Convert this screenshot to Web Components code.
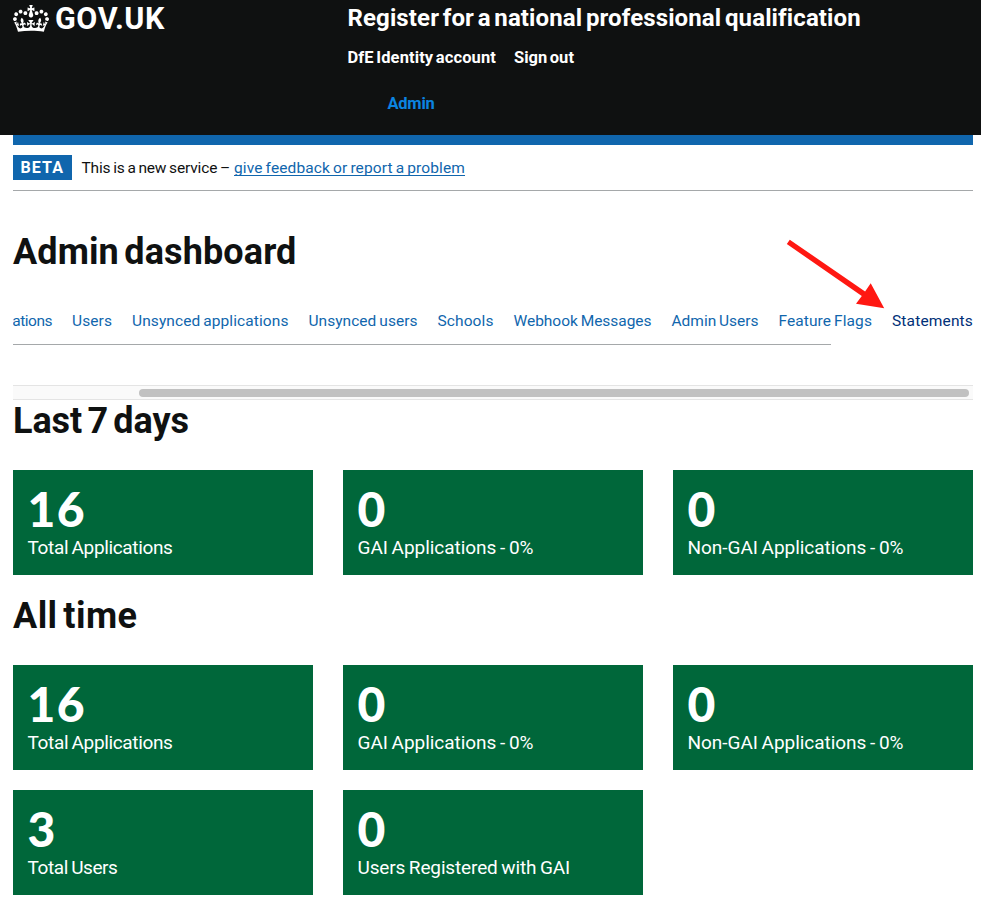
<!DOCTYPE html>
<html lang="en">
<head>
<meta charset="utf-8">
<title>Admin dashboard</title>
<style>
html,body{margin:0;background:#fff}
body{font-family:Roboto,"Liberation Sans",sans-serif;color:#0f1111;width:981px;height:921px;overflow:hidden;word-spacing:-.06em}
</style>
</head>
<body>
<admin-page></admin-page>
<script>
// A run of text whose tracking is tuned to fill a given width.
class FitText extends HTMLElement {
  connectedCallback() {
    const root = this.attachShadow({ mode: 'open' });
    root.innerHTML = `<style>:host{display:inline-block;white-space:nowrap;vertical-align:top}span{display:inline-block}:host([underlined]) span{text-decoration:underline;text-decoration-thickness:1px;text-underline-offset:2px;text-decoration-skip-ink:none}</style><span><slot></slot></span>`;
    const span = root.querySelector('span');
    const w = Number(this.getAttribute('w'));
    const n = this.textContent.length;
    this.style.width = w + 'px';
    span.style.letterSpacing = ((w - span.getBoundingClientRect().width) / n).toFixed(3) + 'px';
  }
}

class SiteHeader extends HTMLElement {
  connectedCallback() {
    this.attachShadow({ mode: 'open' }).innerHTML = `
    <style>
      :host{display:grid;grid-template-columns:334.5px 1fr;box-sizing:border-box;height:135px;padding:0 13px;background:#0f1111;color:#fff;font-weight:700}
      .logo{display:flex;gap:6px;height:36px}
      .logo svg{display:block;margin-top:4.5px}
      .logo fit-text{font-size:30.5px;line-height:37px}
      .title{display:block;font-size:24px;line-height:36px;word-spacing:-.1em}
      nav{display:flex;gap:18px;font-size:16.5px;line-height:20px;margin-top:11.5px;word-spacing:-.1em}
      .admin{display:block;color:#0b84e0;font-size:16.5px;line-height:20px;margin:26px 0 0 40px}
    </style>
    <div class="logo">
      <svg width="36" height="27" viewBox="0 0 132 97" preserveAspectRatio="none" fill="#fff"><path d="M25 30.2c3.5 1.5 7.7-.2 9.1-3.7 1.5-3.6-.2-7.8-3.9-9.2-3.6-1.4-7.6.3-9.1 3.9-1.4 3.5.3 7.5 3.9 9zM9 39.5c3.6 1.5 7.8-.2 9.2-3.7 1.5-3.6-.2-7.8-3.9-9.1-3.6-1.5-7.6.2-9.1 3.8-1.4 3.5.3 7.5 3.8 9zM4.4 57.2c3.5 1.5 7.7-.2 9.1-3.8 1.5-3.6-.2-7.7-3.9-9.1-3.5-1.5-7.6.3-9.1 3.8-1.4 3.5.3 7.6 3.9 9.1zm38.3-21.4c3.5 1.5 7.7-.2 9.1-3.8 1.5-3.6-.2-7.7-3.9-9.1-3.6-1.5-7.6.3-9.1 3.8-1.3 3.6.4 7.7 3.9 9.1zm64.4-5.6c-3.6 1.5-7.8-.2-9.1-3.7-1.5-3.6.2-7.8 3.8-9.2 3.6-1.4 7.7.3 9.2 3.9 1.3 3.5-.4 7.5-3.9 9zm15.9 9.3c-3.6 1.5-7.7-.2-9.1-3.7-1.5-3.6.2-7.8 3.7-9.1 3.6-1.5 7.7.2 9.2 3.8 1.5 3.5-.3 7.5-3.8 9zm4.7 17.7c-3.6 1.5-7.8-.2-9.2-3.8-1.5-3.6.2-7.7 3.9-9.1 3.6-1.5 7.7.3 9.2 3.8 1.3 3.5-.4 7.6-3.9 9.1zM89.3 35.8c-3.6 1.5-7.8-.2-9.2-3.8-1.4-3.6.2-7.7 3.9-9.1 3.6-1.5 7.7.3 9.2 3.8 1.4 3.6-.3 7.7-3.9 9.1zM69.7 17.7l8.9 4.7V9.3l-8.9 2.8c-.2-.3-.5-.6-.9-.9L72.4 0H59.6l3.5 11.2c-.3.3-.6.5-.9.9l-8.8-2.8v13.1l8.8-4.7c.3.3.6.7.9.9l-5 15.4v.1c-.2.8-.4 1.6-.4 2.4 0 4.1 3.1 7.5 7 8.1h.2c.3 0 .7.1 1 .1.4 0 .7 0 1-.1h.2c4-.6 7.1-4.1 7.1-8.1 0-.8-.1-1.7-.4-2.4V34l-5.1-15.4c.4-.2.7-.6 1-.9zM66 92.8c16.9 0 32.8 1.1 47.1 3.2 4-16.9 8.9-26.7 14-33.5l-9.6-3.4c1 4.9 1.1 7.2 0 10.2-1.5-1.4-3-4.3-4.2-8.7L108.6 76c2.8-2 5-3.2 7.5-3.3-4.4 9.4-10 11.9-13.6 11.2-4.3-.8-6.3-4.6-5.6-7.9 1-4.7 5.7-5.9 8-.5 4.3-8.7-3-11.4-7.6-8.8 7.1-7.2 7.9-13.5 2.1-21.1-8 6.1-8.1 12.3-4.5 20.8-4.7-5.4-12.1-2.5-9.5 6.2 3.4-5.2 7.9-2 7.2 3.1-.6 4.3-6.4 7.8-13.5 7.2-10.3-.9-10.9-8-11.2-13.8 2.5-.5 7.1 1.8 11 7.3L80.2 60c-4.1 4.4-8 5.3-12.3 5.4 1.4-4.4 8-11.6 8-11.6H55.5s6.4 7.2 7.9 11.6c-4.2-.1-8-1-12.3-5.4l1.4 16.4c3.9-5.5 8.5-7.7 10.9-7.3-.3 5.8-.9 12.8-11.1 13.8-7.2.6-12.9-2.9-13.5-7.2-.7-5 3.8-8.3 7.1-3.1 2.7-8.7-4.6-11.6-9.4-6.2 3.7-8.5 3.6-14.7-4.6-20.8-5.8 7.6-5 13.9 2.2 21.1-4.7-2.6-11.9.1-7.7 8.8 2.3-5.5 7.1-4.2 8.1.5.7 3.3-1.3 7.1-5.7 7.9-3.5.7-9-1.8-13.5-11.2 2.5.1 4.7 1.3 7.5 3.3l-4.7-15.4c-1.2 4.4-2.7 7.2-4.3 8.7-1.1-3-.9-5.3 0-10.2l-9.5 3.4c5 6.9 9.9 16.7 14 33.5 14.8-2.1 30.8-3.2 47.7-3.2z"/></svg>
      <fit-text w="110">GOV.UK</fit-text>
    </div>
    <div>
      <fit-text class="title" w="513">Register for a national professional qualification</fit-text>
      <nav><fit-text w="148.500">DfE Identity account</fit-text><fit-text w="60">Sign out</fit-text></nav>
      <fit-text class="admin" w="47">Admin</fit-text>
    </div>`;
  }
}

class PhaseBanner extends HTMLElement {
  connectedCallback() {
    this.attachShadow({ mode: 'open' }).innerHTML = `
    <style>
      :host{display:flex;box-sizing:border-box;height:56px;border-top:10px solid #1066ad;border-bottom:1px solid #a5a8aa;padding-top:10px;font-size:15.5px;line-height:27px}
      .tag{background:#1066ad;color:#fff;font-weight:700;font-size:16px;line-height:25px;width:51.5px;padding-left:7.500px;height:25px;margin-right:9.500px}
      a{color:#1066ad;margin-left:4px}
    </style>
    <div class="tag"><fit-text w="43.5">BETA</fit-text></div>
    <fit-text w="148.5">This is a new service –</fit-text><a><fit-text w="231" underlined>give feedback or report a problem</fit-text></a>`;
  }
}

class ScrollNav extends HTMLElement {
  connectedCallback() {
    const items = [['Unsynced applications',156.5],['Unsynced users',109],['Schools',56],['Webhook Messages',138],['Admin Users',87],['Feature Flags',93.5],['Statements',81]];
    this.attachShadow({ mode: 'open' }).innerHTML = `
    <style>
      :host{display:block;height:101px;overflow:hidden}
      .row{position:relative;left:-41px;display:flex;gap:20px;width:1040px;font-size:15.5px;line-height:20px;padding-top:12px;color:#1066ad}
      .clip{overflow:hidden;height:44px}
      .now{color:#003078}
      .rule{width:818px;height:1px;background:#a5a8aa;margin-top:1px}
      .track{box-sizing:border-box;height:15px;margin-top:40px;background:#fafafa;border:solid #e4e4e4;border-width:1px 0;padding:3px 4px 0 126px}
      .thumb{height:8px;border-radius:4px;background:#c1c1c1}
    </style>
    <div class="clip"><div class="row"><fit-text w="80">Applications</fit-text><fit-text w="40">Users</fit-text>${items.map(([t,w]) => `<fit-text w="${w}" class="${t==='Statements'?'now':''}">${t}</fit-text>`).join('')}</div></div>
    <div class="rule"></div>
    <div class="track"><div class="thumb"></div></div>`;
  }
}

class StatCard extends HTMLElement {
  connectedCallback() {
    this.attachShadow({ mode: 'open' }).innerHTML = `
    <style>
      :host{display:block;box-sizing:border-box;height:105px;padding:14px 15px 15px 14.500px;background:#00673a;color:#fff}
      .num{font:900 48px/50px Lato,"DejaVu Sans",sans-serif;height:51px;letter-spacing:1.5px}
      .label{font-size:19px;line-height:25px}
    </style>
    <div class="num">${this.getAttribute('value')}</div>
    <div class="label"><fit-text w="${this.getAttribute('lw')}">${this.getAttribute('label')}</fit-text></div>`;
  }
}

class StatGroup extends HTMLElement {
  connectedCallback() {
    this.attachShadow({ mode: 'open' }).innerHTML = `
    <style>
      :host{display:block;margin-bottom:20px}
      h2{margin:0 0 30px;font-size:36px;line-height:42px;height:40px;word-spacing:-.1em}
      .grid{display:grid;grid-template-columns:repeat(3,300px);gap:20px 30px}
    </style>
    <h2><fit-text w="${this.getAttribute('tw')}">${this.getAttribute('heading')}</fit-text></h2>
    <div class="grid"><slot></slot></div>`;
  }
}

class RedArrow extends HTMLElement {
  connectedCallback() {
    this.attachShadow({ mode: 'open' }).innerHTML = `
    <style>:host{position:absolute;left:780px;top:232px}svg{display:block}</style>
    <svg width="110" height="84"><path d="M9.800 7.700L6.800 12L81.800 64L76 71.700L104.200 76.200L90.700 51.300L85.100 59.500Z" fill="#ff1812"/></svg>`;
  }
}

class AdminPage extends HTMLElement {
  connectedCallback() {
    this.attachShadow({ mode: 'open' }).innerHTML = `
    <style>
      :host{display:block;position:relative}
      main{margin:0 8px 0 13px}
      h1{margin:39px 0 0;font-size:36px;line-height:44px;height:42px;word-spacing:-.1em}
      scroll-nav{margin-top:27px}
    </style>
    <site-header></site-header>
    <main>
      <phase-banner></phase-banner>
      <h1><fit-text w="283.5">Admin dashboard</fit-text></h1>
      <scroll-nav></scroll-nav>
      <stat-group heading="Last 7 days" tw="176">
        <stat-card value="16" label="Total Applications" lw="145"></stat-card>
        <stat-card value="0" label="GAI Applications - 0%" lw="176"></stat-card>
        <stat-card value="0" label="Non-GAI Applications - 0%" lw="216"></stat-card>
      </stat-group>
      <stat-group heading="All time" tw="124.5">
        <stat-card value="16" label="Total Applications" lw="145"></stat-card>
        <stat-card value="0" label="GAI Applications - 0%" lw="176"></stat-card>
        <stat-card value="0" label="Non-GAI Applications - 0%" lw="216"></stat-card>
        <stat-card value="3" label="Total Users" lw="90"></stat-card>
        <stat-card value="0" label="Users Registered with GAI" lw="212.5"></stat-card>
      </stat-group>
    </main>
    <red-arrow></red-arrow>`;
  }
}

customElements.define('fit-text', FitText);
customElements.define('site-header', SiteHeader);
customElements.define('phase-banner', PhaseBanner);
customElements.define('scroll-nav', ScrollNav);
customElements.define('stat-card', StatCard);
customElements.define('stat-group', StatGroup);
customElements.define('red-arrow', RedArrow);
customElements.define('admin-page', AdminPage);
</script>
</body>
</html>
